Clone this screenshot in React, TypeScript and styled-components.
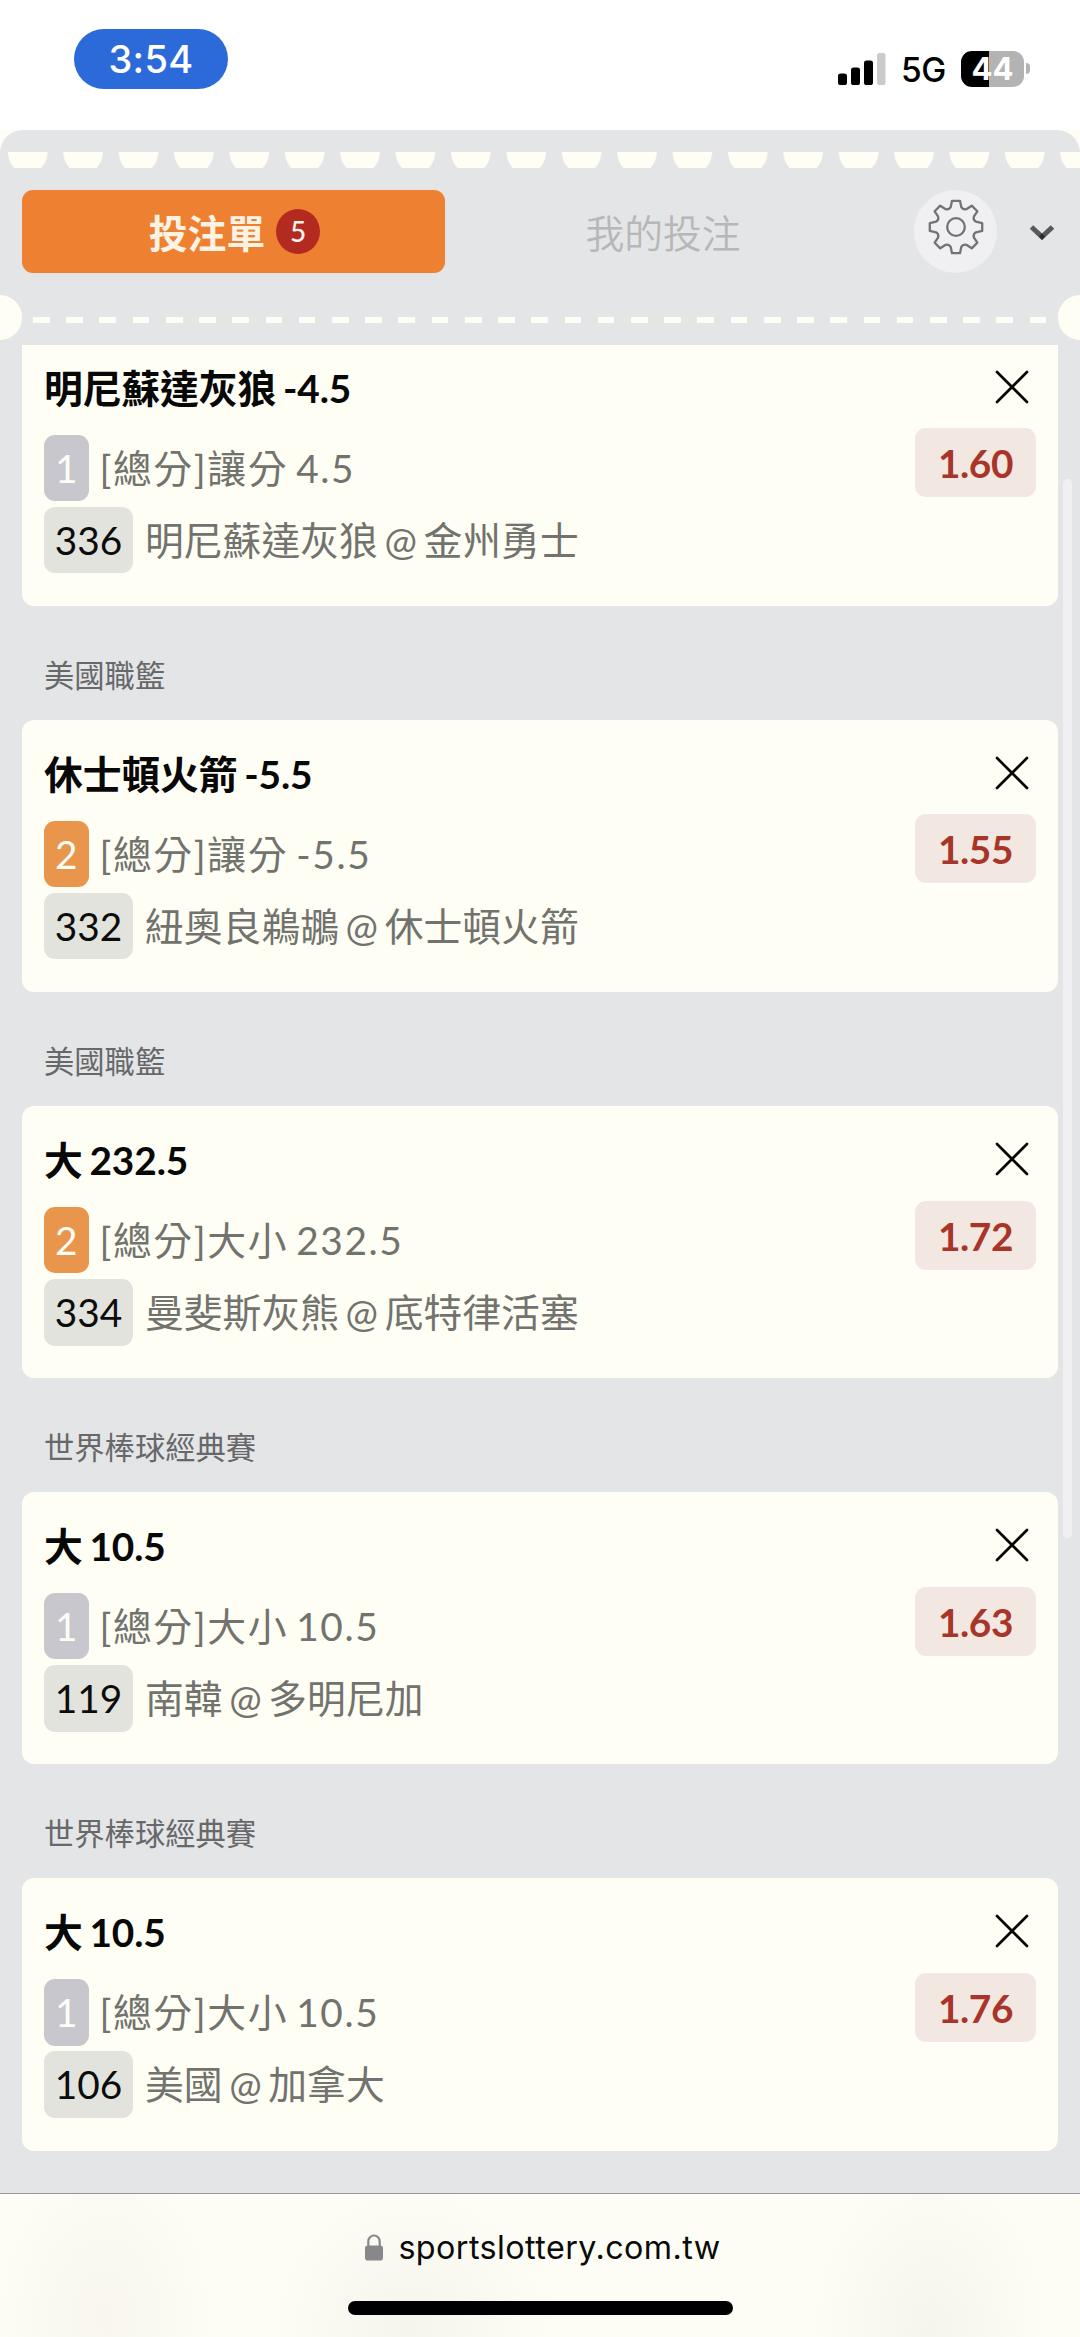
import React from "react";
import styled, { createGlobalStyle } from "styled-components";

const cream = "#fefef4";
const panel = "#e4e5e7";

const GlobalStyle = createGlobalStyle`
  * { box-sizing: border-box; }
  body { margin: 0; background: ${cream}; }
  button { border: 0; padding: 0; margin: 0; background: none; font: inherit; color: inherit; }
`;

const Screen = styled.div`
  width: 1080px;
  height: 2337px;
  display: flex;
  flex-direction: column;
  overflow: hidden;
  background: ${cream};
  font-family: Lato, "Noto Sans CJK TC", sans-serif;
  font-size: 38.8px;
`;

const StatusBar = styled.header`
  height: 130px;
  flex: none;
  display: flex;
  justify-content: space-between;
  padding: 29px 50px 0 74px;
  background: #fff;
  font-family: Inter, sans-serif;
`;

const TimePill = styled.div`
  width: 154px;
  height: 60px;
  border-radius: 30px;
  background: #2d6ad9;
  color: #fff;
  font-size: 38px;
  font-weight: 500;
  letter-spacing: 0.3px;
  line-height: 61px;
  text-align: center;
`;

const StatusIcons = styled.div`
  display: flex;
  align-items: center;
  height: 35px;
  margin-top: 22px;
`;

const Network = styled.span`
  width: 45px;
  margin: 3px 15px 0 15px;
  font-size: 33.5px;
  font-weight: 500;
  letter-spacing: -0.5px;
  line-height: 35px;
`;

const Battery = styled.div`
  width: 63px;
  height: 36px;
  border-radius: 11px;
  background: linear-gradient(90deg, #000 28px, #b3b3b3 28px);
  color: #fff;
  font-size: 31px;
  font-weight: 700;
  line-height: 36px;
  text-align: center;
`;

const BatteryTip = styled.div`
  width: 4px;
  height: 11px;
  margin-left: 2px;
  border-radius: 0 5px 5px 0;
  background: #b3b3b3;
`;

const Slip = styled.main`
  flex: 1;
  min-height: 0;
  position: relative;
  display: flex;
  flex-direction: column;
  background: ${panel};
  border-radius: 23px 23px 0 0;
`;

const Scallops = styled.div`
  height: 16px;
  flex: none;
  margin-top: 22px;
  background: radial-gradient(ellipse 20px 22px at 27.7px 0, ${cream} 97%, transparent 100%) 0 0 / 55.4px 16px repeat-x;
`;

const TabBar = styled.nav`
  display: flex;
  align-items: center;
  height: 83px;
  flex: none;
  margin: 22px 0;
  padding-left: 22px;
`;

const Tab = styled.button<{ $active?: boolean }>`
  width: 423px;
  height: 83px;
  display: flex;
  align-items: center;
  justify-content: center;
  gap: 11px;
  border-radius: 11px;
  background: ${(p) => (p.$active ? "#ee8032" : "transparent")};
  color: ${(p) => (p.$active ? "#fdf3e4" : "#b6b7b9")};
  font-weight: ${(p) => (p.$active ? 700 : 350)};
  padding: 0 0 2px ${(p) => (p.$active ? 2 : 13)}px;
`;

const Count = styled.span`
  width: 44px;
  height: 45px;
  margin-top: 1px;
  border-radius: 50%;
  background: #b32b20;
  color: #fef5ea;
  font-size: 28px;
  font-weight: 500;
  line-height: 44px;
  text-align: center;
`;

const SettingsButton = styled.button`
  width: 83px;
  height: 83px;
  margin-left: 46px;
  padding: 0 0 9px 1px;
  display: flex;
  align-items: center;
  justify-content: center;
  border-radius: 50%;
  background: #f0f0f3;
`;

const CollapseButton = styled.button`
  display: flex;
  margin: 2px 0 0 32px;
`;

const Perforation = styled.div`
  height: 45px;
  flex: none;
  display: flex;
  justify-content: space-between;
  overflow: hidden;
`;

const Notch = styled.span<{ $right?: boolean }>`
  width: 22px;
  height: 45px;
  background: ${cream};
  border-radius: ${(p) => (p.$right ? "23px 0 0 23px" : "0 23px 23px 0")};
`;

const Dashes = styled.span`
  width: 1014px;
  height: 6px;
  margin-top: 22px;
  background: repeating-linear-gradient(90deg, ${cream} 0 16.7px, transparent 16.7px 33.22px);
`;

const List = styled.div`
  flex: 1;
  min-height: 0;
  margin-top: 5px;
  padding: 0 22px;
  overflow: hidden;
`;

const Entry = styled.section`
  &:first-child { margin-top: -11px; }
`;

const League = styled.h2`
  height: 113.9px;
  margin: 0;
  padding: 47px 0 0 22px;
  color: #67686a;
  font-size: 30.3px;
  font-weight: 400;
  line-height: 44px;
`;

const Card = styled.article`
  height: 272.2px;
  display: flex;
  justify-content: space-between;
  padding: 27px 22px 0;
  border-radius: 12px;
  background: ${cream};
`;

const Details = styled.div`
  display: flex;
  flex-direction: column;
  align-items: flex-start;
`;

const Pick = styled.h3`
  margin: 0 0 17.8px;
  height: 56px;
  color: #080808;
  font-size: 38.8px;
  font-weight: 700;
  line-height: 54px;
  letter-spacing: -0.1px;
  word-spacing: -2.6px;
  white-space: nowrap;
`;

const Row = styled.div<{ $wide?: boolean }>`
  height: 66.4px;
  margin-bottom: 5.8px;
  display: flex;
  align-items: center;
  gap: ${(p) => (p.$wide ? 11 : 12)}px;
  color: #72726e;
  font-weight: 400;
  letter-spacing: ${(p) => (p.$wide ? 1.6 : 0)}px;
  word-spacing: -3.3px;
  line-height: 67px;
  white-space: nowrap;
`;

const Tag = styled.span<{ $tone: "away" | "home" | "code" }>`
  width: ${(p) => (p.$tone === "code" ? 89 : 44.5)}px;
  height: 66.4px;
  border-radius: 11px;
  background: ${(p) => ({ away: "#c8c7cd", home: "#e9964c", code: "#e3e3dd" })[p.$tone]};
  color: ${(p) => (p.$tone === "code" ? "#0c0c0c" : "#fdfdf8")};
  font-weight: 400;
  letter-spacing: 0;
  text-align: center;
`;

const Side = styled.div`
  display: flex;
  flex-direction: column;
  align-items: flex-end;
`;

const RemoveButton = styled.button`
  display: flex;
  margin: 8.7px 7px 24.7px 0;
`;

const Odds = styled.div`
  width: 121px;
  height: 69px;
  border-radius: 11px;
  background: #f3e8e1;
  color: #a83529;
  font-weight: 700;
  letter-spacing: -0.4px;
  line-height: 70px;
  text-align: center;
`;

const ScrollThumb = styled.div`
  position: absolute;
  top: 349px;
  right: 8px;
  width: 9px;
  height: 1059px;
  border-radius: 5px;
  background: #f0f0f3;
`;

const BrowserBar = styled.footer`
  height: 144px;
  flex: none;
  display: flex;
  flex-direction: column;
  align-items: center;
  border-top: 1px solid #979797;
  background:
    radial-gradient(ellipse 110px 160px at 105px 125px, #f8f6ee, transparent),
    radial-gradient(ellipse 140px 140px at 410px 135px, #f6f5ed, transparent),
    radial-gradient(ellipse 120px 160px at 930px 135px, #f5f4ed, transparent),
    #fdfdf5;
`;

const Address = styled.div`
  display: flex;
  align-items: flex-start;
  gap: 15px;
  height: 107px;
  padding: 34px 0 0 6px;
  font-family: Inter, sans-serif;
  font-size: 32.3px;
  line-height: 40px;
  letter-spacing: 0.42px;
  color: #0a0a0a;
  svg { margin-top: 6px; }
`;

const HomeIndicator = styled.div`
  width: 385px;
  height: 14px;
  border-radius: 7px;
  background: #000;
`;

const SignalIcon = () => (
  <svg width="48" height="33" viewBox="0 0 48 33">
    <rect x="0" y="21.5" width="9" height="11.5" rx="2.6" />
    <rect x="13" y="15.5" width="9" height="17.5" rx="2.6" />
    <rect x="26" y="8.5" width="9" height="24.5" rx="2.6" />
    <rect x="39" y="1" width="8.5" height="32" rx="2.6" fill="#cbcbcb" />
  </svg>
);

const gearPath = (() => {
  const points: string[] = [];
  for (let i = 0; i < 8; i++) {
    const base = (i * Math.PI) / 4 - Math.PI / 2;
    const at = (angle: number, r: number) =>
      `${(28 + r * Math.cos(base + angle)).toFixed(2)} ${(28 + r * Math.sin(base + angle)).toFixed(2)}`;
    points.push(`${i ? "L" : "M"}${at(-0.26, 20.6)}`);
    points.push(`L${at(-0.15, 26.5)} L${at(0.15, 26.5)} L${at(0.26, 20.6)}`);
    points.push(`Q${at(Math.PI / 8, 18.4)} ${at(Math.PI / 4 - 0.26, 20.6)}`);
  }
  return points.join(" ") + "Z";
})();

const GearIcon = () => (
  <svg width="56" height="56" viewBox="0 0 56 56" fill="none" stroke="#737376" strokeWidth="2.3" strokeLinejoin="round">
    <path d={gearPath} />
    <circle cx="28" cy="28" r="8.8" />
  </svg>
);

const ChevronIcon = () => (
  <svg width="26" height="18" viewBox="0 0 26 18" fill="none" stroke="#59595c" strokeWidth="5">
    <path d="M2.5 3 13 12.8 23.5 3" />
    <path d="M13 9.2 16 12.6 13 15.8 10 12.6Z" fill="#2c2c2e" stroke="none" />
  </svg>
);

const CloseIcon = () => (
  <svg width="34" height="34" viewBox="0 0 34 34" stroke="#080808" strokeWidth="2.7" strokeLinecap="round">
    <path d="M2 2 32 32M32 2 2 32" />
  </svg>
);

const LockIcon = () => (
  <svg width="18" height="27" viewBox="0 0 18 27">
    <path d="M3.3 13V7.2a5.7 5.7 0 0 1 11.4 0V13" fill="none" stroke="#88888a" strokeWidth="2.2" />
    <rect y="11.5" width="18" height="15" rx="2.8" fill="#88888a" />
  </svg>
);

type Bet = { league?: string; pick: string; side: "1" | "2"; market: string; code: string; match: string; odds: string };

const bets: Bet[] = [
  { pick: "明尼蘇達灰狼 -4.5", side: "1", market: "[總分]讓分 4.5", code: "336", match: "明尼蘇達灰狼 @ 金州勇士", odds: "1.60" },
  { league: "美國職籃", pick: "休士頓火箭 -5.5", side: "2", market: "[總分]讓分 -5.5", code: "332", match: "紐奧良鵜鶘 @ 休士頓火箭", odds: "1.55" },
  { league: "美國職籃", pick: "大 232.5", side: "2", market: "[總分]大小 232.5", code: "334", match: "曼斐斯灰熊 @ 底特律活塞", odds: "1.72" },
  { league: "世界棒球經典賽", pick: "大 10.5", side: "1", market: "[總分]大小 10.5", code: "119", match: "南韓 @ 多明尼加", odds: "1.63" },
  { league: "世界棒球經典賽", pick: "大 10.5", side: "1", market: "[總分]大小 10.5", code: "106", match: "美國 @ 加拿大", odds: "1.76" },
];

const BetEntry = ({ bet }: { bet: Bet }) => (
  <Entry>
    {bet.league && <League>{bet.league}</League>}
    <Card>
      <Details>
        <Pick>{bet.pick}</Pick>
        <Row $wide>
          <Tag $tone={bet.side === "1" ? "away" : "home"}>{bet.side}</Tag>
          <span>{bet.market}</span>
        </Row>
        <Row>
          <Tag $tone="code">{bet.code}</Tag>
          <span>{bet.match}</span>
        </Row>
      </Details>
      <Side>
        <RemoveButton aria-label="移除">
          <CloseIcon />
        </RemoveButton>
        <Odds>{bet.odds}</Odds>
      </Side>
    </Card>
  </Entry>
);

export default function App() {
  return (
    <Screen>
      <GlobalStyle />
      <StatusBar>
        <TimePill>3:54</TimePill>
        <StatusIcons>
          <SignalIcon />
          <Network>5G</Network>
          <Battery>44</Battery>
          <BatteryTip />
        </StatusIcons>
      </StatusBar>
      <Slip>
        <Scallops />
        <TabBar>
          <Tab $active>
            投注單<Count>5</Count>
          </Tab>
          <Tab>我的投注</Tab>
          <SettingsButton aria-label="設定">
            <GearIcon />
          </SettingsButton>
          <CollapseButton aria-label="收合">
            <ChevronIcon />
          </CollapseButton>
        </TabBar>
        <Perforation>
          <Notch />
          <Dashes />
          <Notch $right />
        </Perforation>
        <List>
          {bets.map((bet) => (
            <BetEntry key={bet.code} bet={bet} />
          ))}
        </List>
        <ScrollThumb />
      </Slip>
      <BrowserBar>
        <Address>
          <LockIcon />
          sportslottery.com.tw
        </Address>
        <HomeIndicator />
      </BrowserBar>
    </Screen>
  );
}
